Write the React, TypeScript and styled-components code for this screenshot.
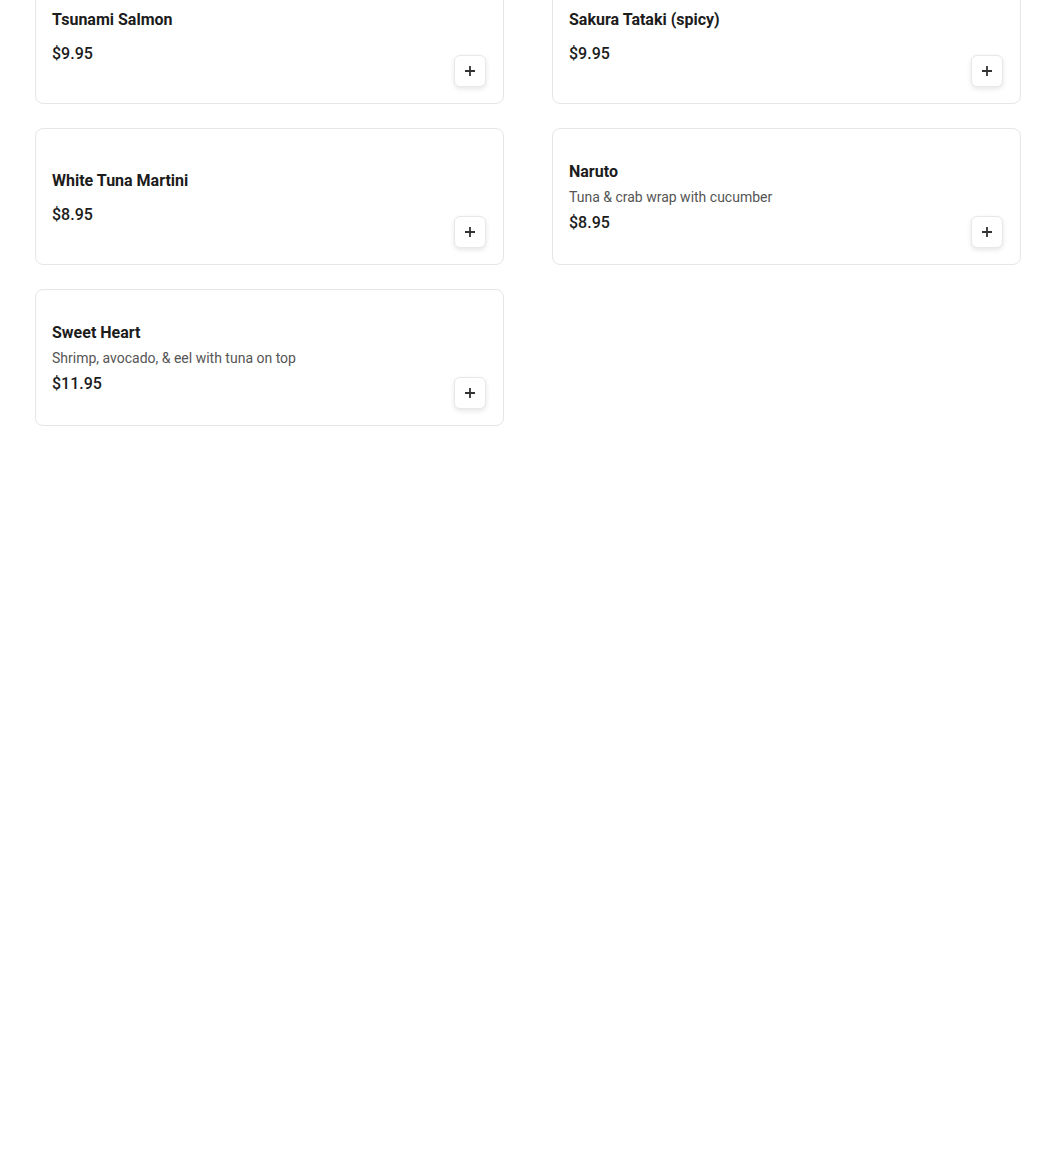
import React from 'react';
import styled, { createGlobalStyle } from 'styled-components';

interface MenuItem {
  name: string;
  description?: string;
  price: string;
}

const items: MenuItem[] = [
  { name: 'Tsunami Salmon', price: '$9.95' },
  { name: 'Sakura Tataki (spicy)', price: '$9.95' },
  { name: 'White Tuna Martini', price: '$8.95' },
  { name: 'Naruto', description: 'Tuna & crab wrap with cucumber', price: '$8.95' },
  { name: 'Sweet Heart', description: 'Shrimp, avocado, & eel with tuna on top', price: '$11.95' },
];

const GlobalStyle = createGlobalStyle`
  html, body {
    margin: 0;
    padding: 0;
    background: #fff;
    font-family: Roboto, 'Liberation Sans', Arial, sans-serif;
    overflow: hidden;
  }
`;

const Page = styled.div`
  width: 1050px;
  height: 1172px;
  overflow: hidden;
`;

/* the list is scrolled a bit, so the first row is cut off at the top */
const Grid = styled.div`
  display: grid;
  grid-template-columns: 469px 469px;
  column-gap: 48px;
  row-gap: 24px;
  margin-top: -33px;
  padding-left: 35px;
`;

const Card = styled.div`
  box-sizing: border-box;
  height: 137px;
  border: 1px solid #e6e6e6;
  border-radius: 8px;
  background: #fff;
  padding: 16px 17px 16px 16px;
  display: flex;
  align-items: center;
  justify-content: space-between;
`;

const Info = styled.div`
  display: flex;
  flex-direction: column;
  margin-top: 2px;
`;

const Title = styled.div<{ $hasDesc: boolean }>`
  font-size: 16px;
  line-height: 24px;
  font-weight: 700;
  color: #1c1c1c;
  margin-bottom: ${({ $hasDesc }) => ($hasDesc ? '3px' : '10px')};
`;

const Description = styled.div`
  font-size: 14px;
  line-height: 20px;
  color: #555;
  margin-bottom: 4px;
`;

const Price = styled.div`
  font-size: 16px;
  line-height: 24px;
  font-weight: 500;
  color: #1c1c1c;
`;

const AddButton = styled.button`
  align-self: flex-end;
  width: 32px;
  height: 32px;
  padding: 0;
  border: 1px solid #e8e8e8;
  border-radius: 6px;
  background: #fff;
  box-shadow: 0 2px 5px rgba(0, 0, 0, 0.1);
  display: flex;
  align-items: center;
  justify-content: center;
  cursor: pointer;
`;

const PlusIcon = () => (
  <svg width="10" height="10" viewBox="0 0 10 10">
    <path d="M5 0v10M0 5h10" stroke="#333" strokeWidth="1.8" fill="none" />
  </svg>
);

const App: React.FC = () => (
  <Page>
    <GlobalStyle />
    <Grid>
      {items.map((item) => (
        <Card key={item.name}>
          <Info>
            <Title $hasDesc={!!item.description}>{item.name}</Title>
            {item.description && <Description>{item.description}</Description>}
            <Price>{item.price}</Price>
          </Info>
          <AddButton aria-label={`Add ${item.name}`}>
            <PlusIcon />
          </AddButton>
        </Card>
      ))}
    </Grid>
  </Page>
);

export default App;
